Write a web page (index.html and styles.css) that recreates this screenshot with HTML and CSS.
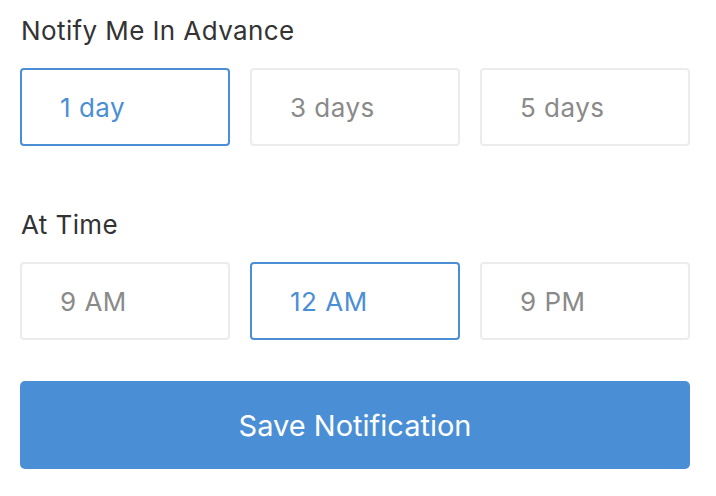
FILE: index.html
```html
<!DOCTYPE html>
<html>
<head>
<meta charset="utf-8">
<link rel="stylesheet" href="styles.css">
</head>
<body>
<div class="page">
  <section class="group">
    <h2 class="label">Notify Me In Advance</h2>
    <div class="options">
      <div class="option selected">1 day</div>
      <div class="option">3 days</div>
      <div class="option">5 days</div>
    </div>
  </section>
  <section class="group">
    <h2 class="label">At Time</h2>
    <div class="options">
      <div class="option">9 AM</div>
      <div class="option selected">12 AM</div>
      <div class="option">9 PM</div>
    </div>
  </section>
  <button class="save">Save Notification</button>
</div>
</body>
</html>
```
FILE: styles.css
```css
html, body {
  margin: 0;
  padding: 0;
  background: #ffffff;
}
body {
  font-family: Inter, "Liberation Sans", Arial, sans-serif;
}
.page {
  padding: 14px 26px 0 20px;
  display: flex;
  flex-direction: column;
}
.group {
  display: flex;
  flex-direction: column;
  margin-bottom: 62px;
}
.group + .group {
  margin-bottom: 41px;
}
.label {
  margin: 0 0 20px 1px;
  font-size: 26px;
  font-weight: normal;
  letter-spacing: 0.4px;
  color: #333333;
  line-height: 34px;
}
.options {
  display: grid;
  grid-template-columns: repeat(3, 1fr);
  gap: 20px;
}
.option {
  height: 78px;
  box-sizing: border-box;
  border: 2px solid #ececec;
  border-radius: 4px;
  display: flex;
  align-items: center;
  padding-left: 38px;
  font-size: 26px;
  letter-spacing: 0.5px;
  color: #8a8a8a;
}
.option.selected {
  border-color: #4a8fd6;
  color: #4a8fd6;
}
.save {
  height: 88px;
  border: none;
  border-radius: 5px;
  background: #4a8fd6;
  color: #ffffff;
  font-family: Inter, "Liberation Sans", Arial, sans-serif;
  font-size: 29px;
  margin-top: 0;
}
```
